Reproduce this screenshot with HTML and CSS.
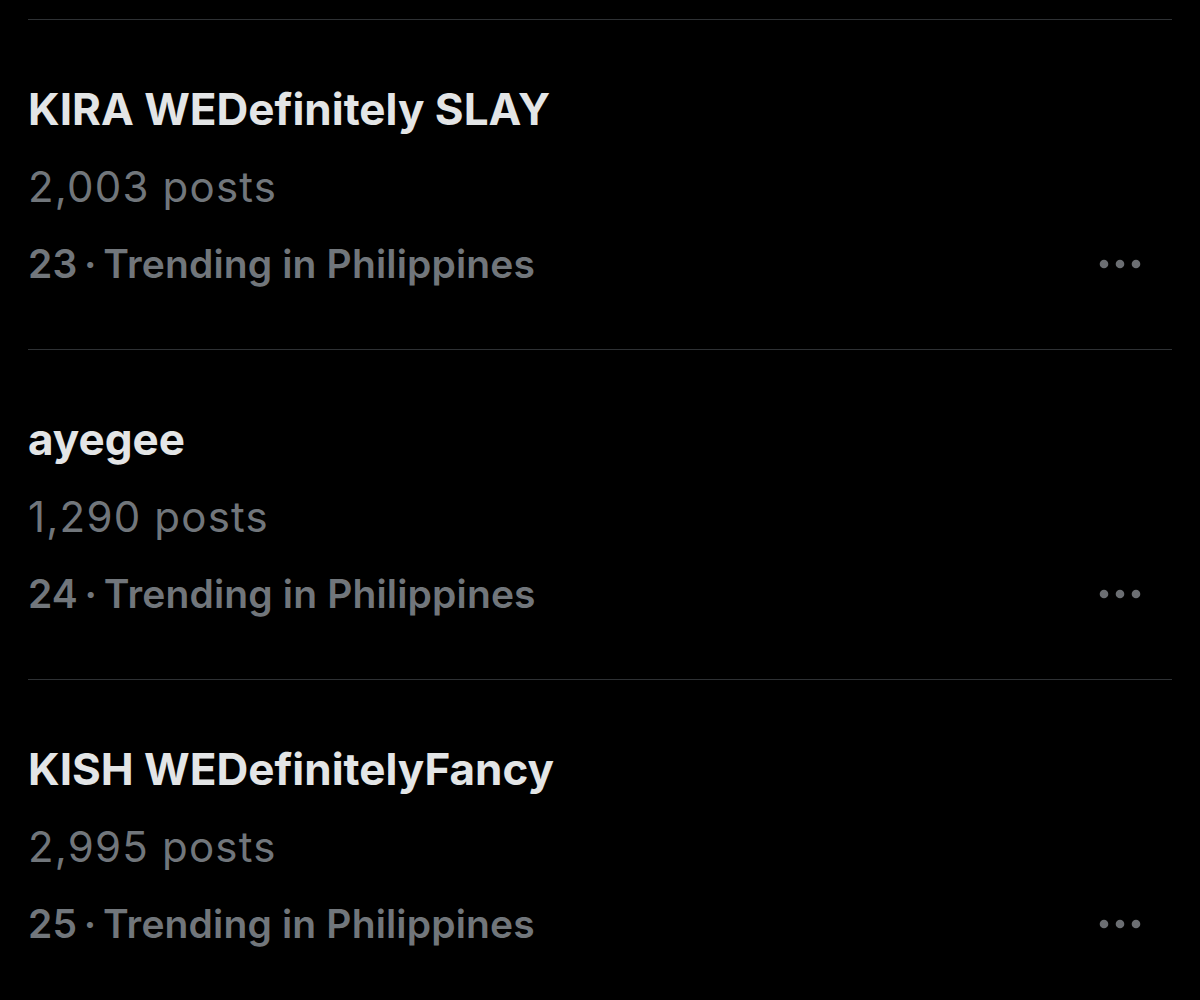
FILE: index.html
```html
<!DOCTYPE html>
<html lang="en">

<head>
  <meta charset="UTF-8">
  <meta name="viewport" content="width=device-width, initial-scale=1.0">
  <title>Trending</title>
  <link rel="stylesheet" href="styles.css">
</head>

<body>
  <div class="trend-list">
    <div class="trend">
      <div class="trend-title">KIRA WEDefinitely SLAY</div>
      <div class="trend-count">2,003 posts</div>
      <div class="trend-meta">
        <span>23&thinsp;·&thinsp;Trending in Philippines</span>
        <button class="more">
          <svg width="46" height="10" viewBox="0 0 46 10" xmlns="http://www.w3.org/2000/svg">
            <circle cx="5" cy="5" r="4.3" fill="#6b6e72" />
            <circle cx="21" cy="5" r="4.3" fill="#6b6e72" />
            <circle cx="37" cy="5" r="4.3" fill="#6b6e72" />
          </svg>
        </button>
      </div>
    </div>
    <div class="trend">
      <div class="trend-title">ayegee</div>
      <div class="trend-count">1,290 posts</div>
      <div class="trend-meta">
        <span>24&thinsp;·&thinsp;Trending in Philippines</span>
        <button class="more">
          <svg width="46" height="10" viewBox="0 0 46 10" xmlns="http://www.w3.org/2000/svg">
            <circle cx="5" cy="5" r="4.3" fill="#6b6e72" />
            <circle cx="21" cy="5" r="4.3" fill="#6b6e72" />
            <circle cx="37" cy="5" r="4.3" fill="#6b6e72" />
          </svg>
        </button>
      </div>
    </div>
    <div class="trend">
      <div class="trend-title">KISH WEDefinitelyFancy</div>
      <div class="trend-count">2,995 posts</div>
      <div class="trend-meta">
        <span>25&thinsp;·&thinsp;Trending in Philippines</span>
        <button class="more">
          <svg width="46" height="10" viewBox="0 0 46 10" xmlns="http://www.w3.org/2000/svg">
            <circle cx="5" cy="5" r="4.3" fill="#6b6e72" />
            <circle cx="21" cy="5" r="4.3" fill="#6b6e72" />
            <circle cx="37" cy="5" r="4.3" fill="#6b6e72" />
          </svg>
        </button>
      </div>
    </div>
  </div>
</body>

</html>
```

FILE: styles.css
```css
body {
  margin: 0;
  background: #000;
  font-family: Inter, "Noto Sans", sans-serif;
}

.trend-list {
  margin: 0 28px;
  padding-top: 19px;
}

.trend {
  border-top: 1px solid #2e3134;
  padding: 50px 0 0;
  height: 279px;
}

.trend-title {
  color: #e3e5e6;
  font-size: 44px;
  font-weight: 700;
  line-height: 78px;
}

.trend-count {
  color: #71767b;
  font-size: 42px;
  font-weight: 400;
  line-height: 78px;
  letter-spacing: 1.2px;
}

.trend-meta {
  display: flex;
  justify-content: space-between;
  align-items: center;
  color: #71767b;
  font-size: 39px;
  font-weight: 600;
  line-height: 76px;
  letter-spacing: 0.15px;
}

.more {
  background: transparent;
  border: none;
  padding: 0;
  margin-right: 27px;
  display: flex;
}
```
